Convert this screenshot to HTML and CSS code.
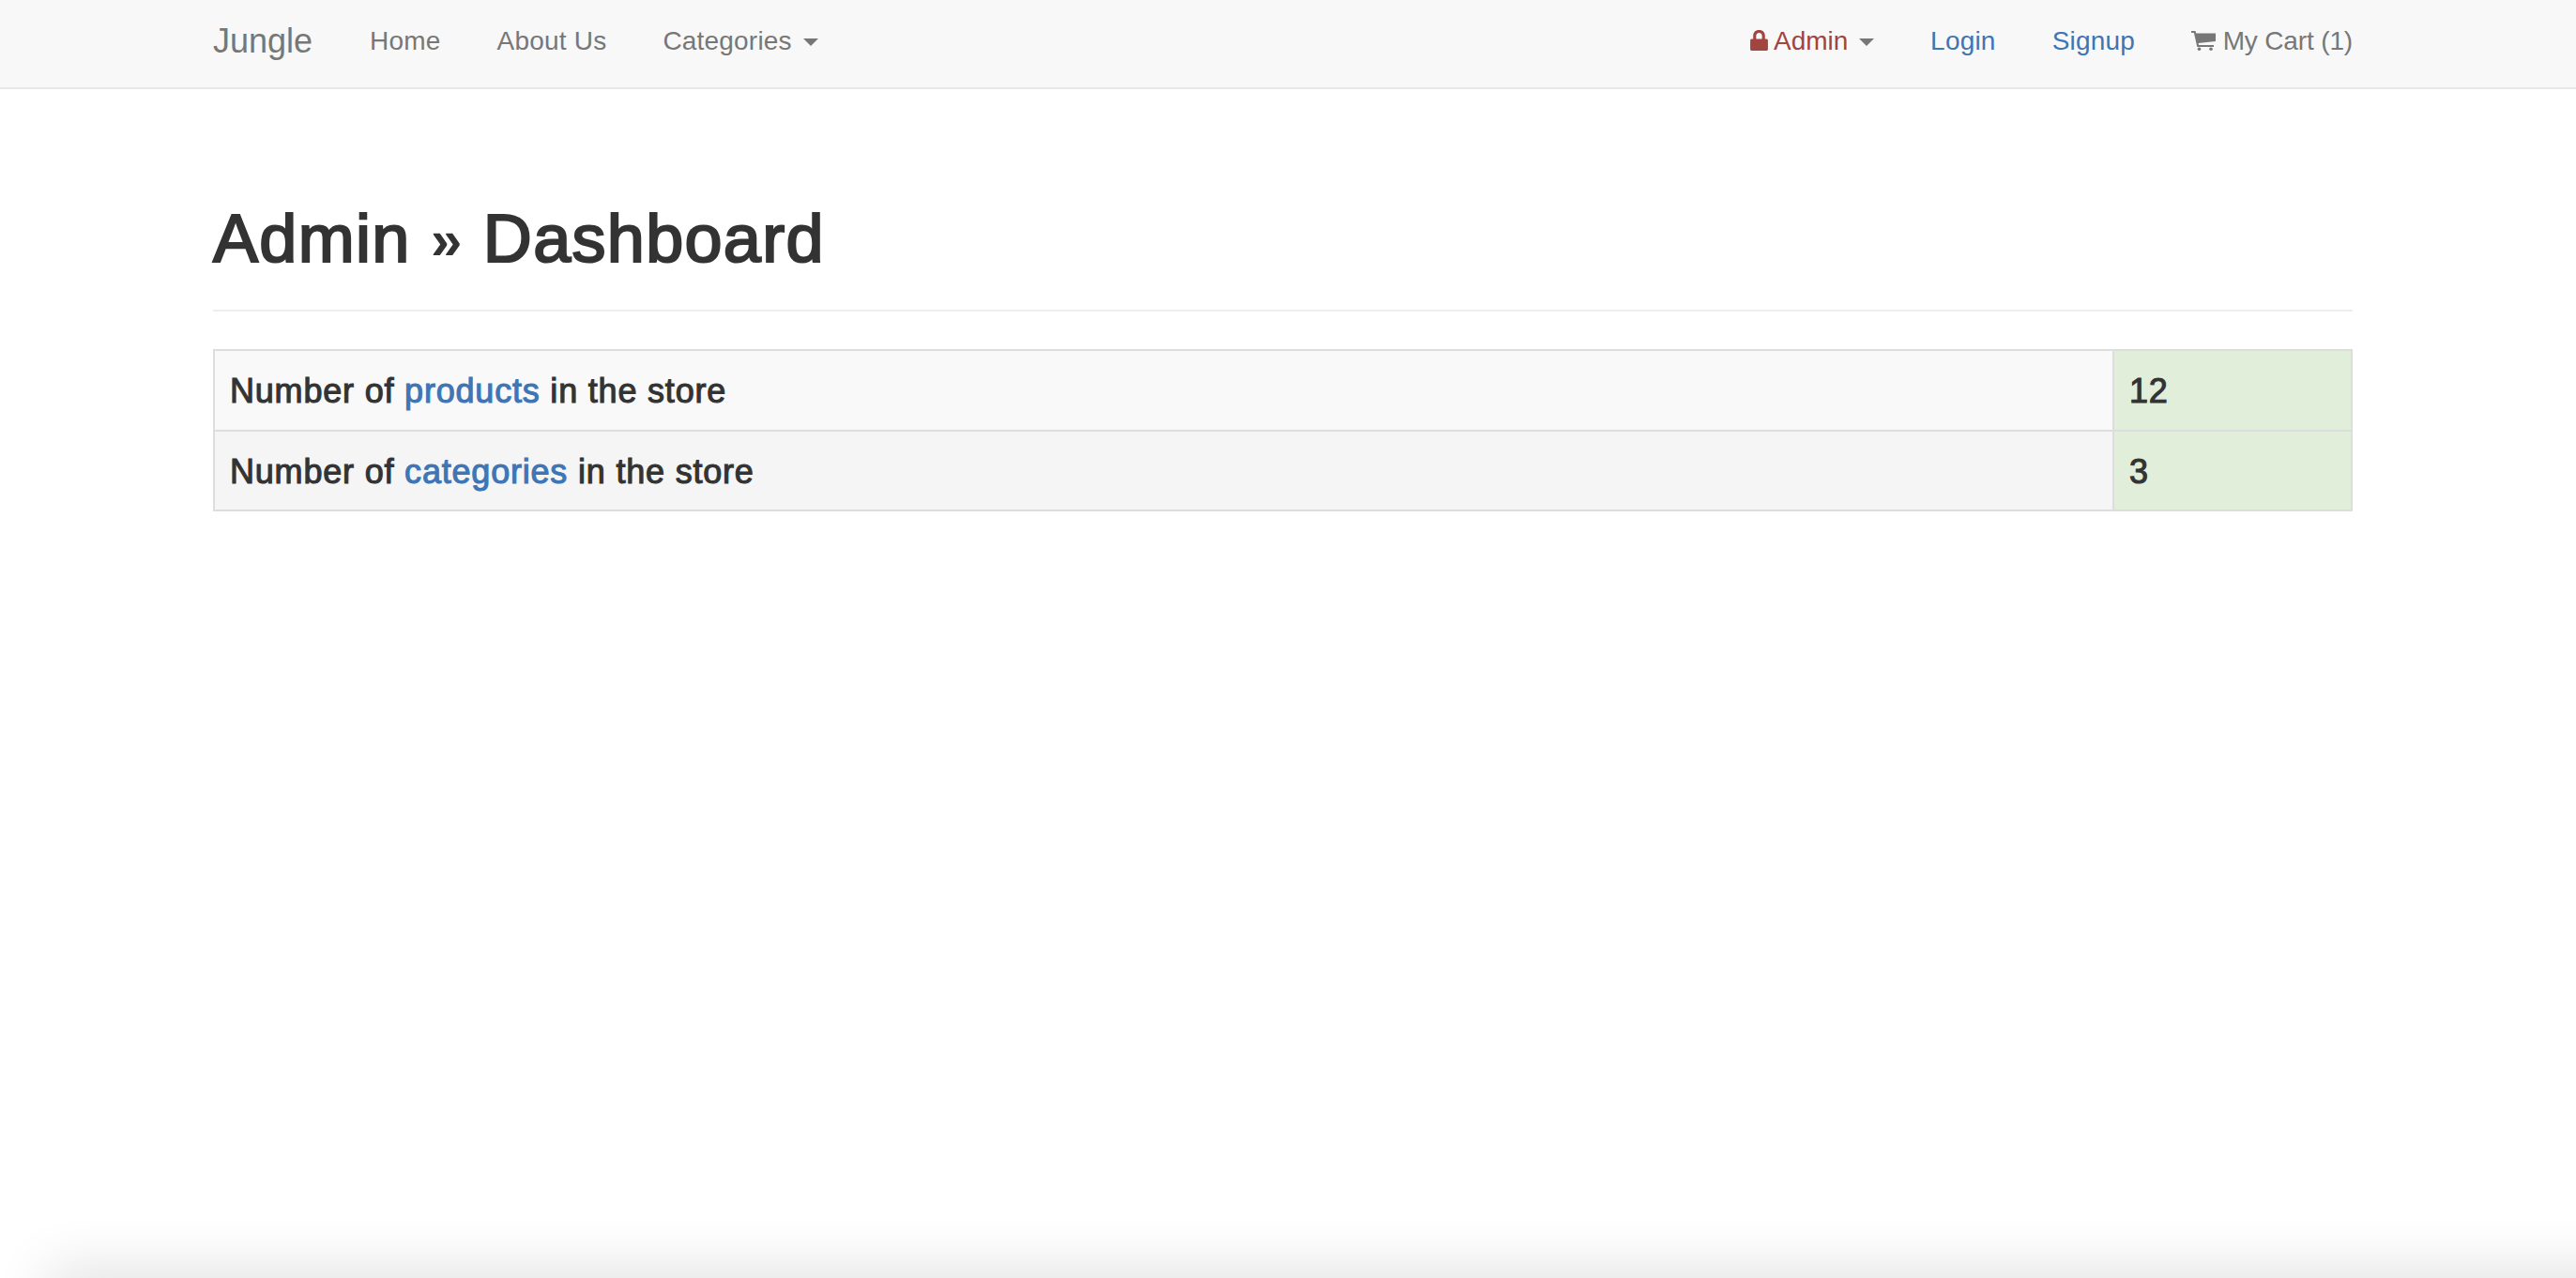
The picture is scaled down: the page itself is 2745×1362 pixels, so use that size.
FILE: index.html
```html
<!DOCTYPE html>
<html lang="en">
<head>
    <meta charset="UTF-8">
    <title>Jungle</title>
    <link rel="stylesheet" href="styles.css">
</head>
<body>
<nav class="navbar">
    <div class="container navbar-inner">
        <a class="brand" href="#">Jungle</a>
        <ul class="nav">
            <li><a href="#">Home</a></li>
            <li><a href="#">About Us</a></li>
            <li><a href="#">Categories <span class="caret"></span></a></li>
        </ul>
        <ul class="nav nav-right">
            <li>
                <a class="admin" href="#">
                    <svg class="icon lock" viewBox="0 0 18 21"><path fill="currentColor" d="M9 0C5 0 3 2.500 3 6V9H1.500C.7 9 0 9.700 0 10.500V19.500C0 20.300.7 21 1.500 21H16.500C17.300 21 18 20.300 18 19.500V10.500C18 9.700 17.300 9 16.500 9H15V6C15 2.500 13 0 9 0ZM9 2.800C11 2.800 12 4 12 6V9H6V6C6 4 7 2.800 9 2.800Z"/></svg>
                    Admin <span class="caret"></span>
                </a>
            </li>
            <li><a class="link" href="#">Login</a></li>
            <li><a class="link" href="#">Signup</a></li>
            <li>
                <a class="cart-link" href="#">
                    <svg class="icon cart" viewBox="0 0 26 21"><path fill="currentColor" d="M0 0H4.500L5.200 2.400H26V11L7.500 13L8 15H24V17H6.300L2.900 2H0Z"/><circle fill="currentColor" cx="8.500" cy="19.200" r="1.800"/><circle fill="currentColor" cx="21" cy="19.200" r="1.800"/></svg>
                    My Cart (1)
                </a>
            </li>
        </ul>
    </div>
</nav>

<main class="container">
    <h1 class="page-header">Admin <span class="sep">&raquo;</span> Dashboard</h1>
    <table class="stats">
        <tr>
            <td>Number of <a href="#">products</a> in the store</td>
            <td class="value">12</td>
        </tr>
        <tr>
            <td>Number of <a href="#">categories</a> in the store</td>
            <td class="value">3</td>
        </tr>
    </table>
</main>
<div class="bottom-shadow"></div>
</body>
</html>
```

FILE: styles.css
```css
html, body {
    height: 100%;
    overflow: hidden;
}
body {
    margin: 0;
    background: #fff;
    color: #333;
    font-family: "Liberation Sans", Arial, sans-serif;
    font-size: 28px;
    line-height: 40px;
}
a {
    text-decoration: none;
}
.container {
    width: 2280px;
    margin-left: 227px;
}

/* navbar */
.navbar {
    height: 93px;
    background: #f8f8f8;
    border-bottom: 2px solid #e7e7e7;
}
.navbar-inner {
    display: flex;
    align-items: center;
    height: 87px;
}
.brand {
    color: #777;
    font-size: 36px;
    margin-right: 61px;
}
.nav {
    display: flex;
    gap: 60px;
    margin: 0;
    padding: 0;
    list-style: none;
    letter-spacing: .2px;
}
.nav a {
    color: #777;
}
.nav a.link {
    color: #3f75b5;
}
.nav a.admin {
    color: #a04540;
    letter-spacing: 0;
}
.nav a.cart-link {
    letter-spacing: -.15px;
}
.nav-right {
    margin-left: auto;
}
.caret {
    display: inline-block;
    margin-left: 4px;
    vertical-align: middle;
    border-top: 8px solid #777;
    border-left: 8px solid transparent;
    border-right: 8px solid transparent;
}
.icon {
    display: inline-block;
    height: 21px;
    vertical-align: -1px;
}
.lock {
    width: 19px;
    height: 22px;
}
.cart {
    width: 26px;
}

/* dashboard */
.page-header {
    margin: 120px 0 40px;
    padding-bottom: 36px;
    border-bottom: 2px solid #eee;
    font-size: 72px;
    line-height: 79px;
    font-weight: normal;
    letter-spacing: 1.3px;
    -webkit-text-stroke: 2.2px #333;
}
.sep {
    font-size: 60px;
    font-weight: bold;
    line-height: 0;
    vertical-align: 3px;
    -webkit-text-stroke: 0;
}
.stats {
    width: 100%;
    border-collapse: collapse;
    border: 2px solid #ddd;
    font-size: 36px;
    line-height: 52px;
    font-weight: normal;
    letter-spacing: .8px;
    -webkit-text-stroke: 1.1px;
}
.stats td {
    padding: 17px 16px 15px;
    border: 2px solid #ddd;
}
.stats a {
    color: #3f75b5;
}
.stats tr:nth-child(1) td {
    background: #f9f9f9;
}
.stats tr:nth-child(2) td {
    padding-bottom: 14px;
    background: #f5f5f5;
}
.stats tr td.value {
    width: 220px;
    background: #e1eeda;
}

/* soft shadow coming up from the bottom edge */
.bottom-shadow {
    position: fixed;
    left: 60px;
    right: -100px;
    bottom: -40px;
    height: 40px;
    box-shadow: 0 0 60px 10px rgba(0, 0, 0, .12);
}
```
